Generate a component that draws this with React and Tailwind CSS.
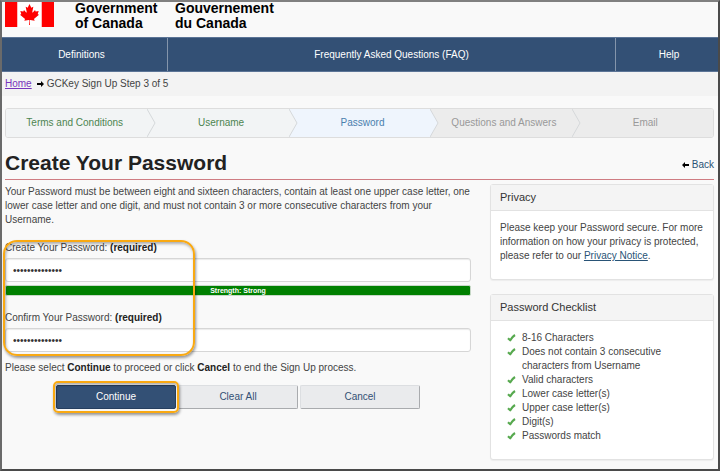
import React, { useState } from "react";

const steps = [
  { title: "Terms and Conditions", state: "done" },
  { title: "Username", state: "done" },
  { title: "Password", state: "current" },
  { title: "Questions and Answers", state: "todo" },
  { title: "Email", state: "todo" },
];

const stepClasses = {
  done: "bg-[#f2f4f5] text-[#4d8450]",
  current: "bg-[#eff5fd] text-[#4a80ad]",
  todo: "bg-[#ececec] text-[#999999]",
};

const stepFills = {
  done: "fill-[#f2f4f5]",
  current: "fill-[#eff5fd]",
  todo: "fill-[#ececec]",
};

const checklist = [
  "8-16 Characters",
  "Does not contain 3 consecutive characters from Username",
  "Valid characters",
  "Lower case letter(s)",
  "Upper case letter(s)",
  "Digit(s)",
  "Passwords match",
];

function CanadaFlag() {
  return (
    <svg viewBox="0 0 9600 4800" className="h-[25px] w-[49px] shrink-0" preserveAspectRatio="none" aria-hidden="true">
      <path fill="#fff" d="M2400 0h4800v4800H2400z" />
      <path fill="#f00" d="M0 0h2400v4800H0zM7200 0h2400v4800H7200z" />
      <path
        fill="#f00"
        d="M4890 4430l-45-863a95 95 0 0 1 111-98l859 151-116-320a65 65 0 0 1 20-73l941-762-212-99a65 65 0 0 1-34-79l186-572-542 115a65 65 0 0 1-73-38l-105-247-423 454a65 65 0 0 1-111-57l204-1052-327 189a65 65 0 0 1-91-27l-332-652-332 652a65 65 0 0 1-91 27l-327-189 204 1052a65 65 0 0 1-111 57l-423-454-105 247a65 65 0 0 1-73 38l-542-115 186 572a65 65 0 0 1-34 79l-212 99 941 762a65 65 0 0 1 20 73l-116 320 859-151a95 95 0 0 1 111 98l-45 863z"
      />
    </svg>
  );
}

function Arrow({ left }) {
  return (
    <svg viewBox="0 0 14 12" className="h-[6px] w-[7px] shrink-0" aria-hidden="true">
      <path
        fill="#000"
        d={left ? "M0 6l6-6v4h8v4H6v4z" : "M14 6L8 0v4H0v4h8v4z"}
      />
    </svg>
  );
}

function Tick() {
  return (
    <svg viewBox="0 0 18 16" className="mt-[3px] h-[8px] w-[9px] shrink-0" aria-hidden="true">
      <path
        d="M2 8.500L6.500 12.500C9 8 12 4.500 16 2"
        fill="none"
        stroke="#57a94f"
        strokeWidth="4.5"
        strokeLinejoin="round"
      />
    </svg>
  );
}

// orange callout drawn over the page
function Highlight({ className }) {
  return (
    <span
      aria-hidden="true"
      className={`pointer-events-none absolute border-2 border-[#f9a912] shadow-[1px_2px_3px_rgba(0,0,0,0.4),inset_1px_2px_3px_rgba(0,0,0,0.3)] ${className}`}
    />
  );
}

function PasswordField({ id, label, value, onChange }) {
  return (
    <div>
      <label htmlFor={id} className="block h-[14px]">
        {label}: <strong className="text-[#222222]">(required)</strong>
      </label>
      <input
        id={id}
        type="password"
        value={value}
        onChange={(e) => onChange(e.target.value)}
        className="mt-[3px] block h-6 w-full rounded-[3px] border border-[#d6d6d6] bg-white px-[7px] text-[10px] text-[#333333] shadow-[inset_0_1px_1px_rgba(0,0,0,0.08)] outline-none"
      />
    </div>
  );
}

function Panel({ title, children }) {
  return (
    <section className="rounded-[3px] border border-[#e2e2e2] bg-white shadow-[0_1px_1px_rgba(0,0,0,0.05)]">
      <h2 className="border-b border-[#e2e2e2] bg-[#f4f4f4] px-[9px] py-[5px] text-[11px] leading-[15px] text-[#333333]">
        {title}
      </h2>
      <div className="px-[9px] pt-[10px] pb-4">{children}</div>
    </section>
  );
}

function App() {
  const [password, setPassword] = useState("Maple12Leaf345");
  const [confirm, setConfirm] = useState("Maple12Leaf345");

  const buttonClasses =
    "h-6 w-[120px] rounded-[2px] border border-[#dcdee1] border-r-[#a9abae] border-b-[#a9abae] bg-[#eaebed] text-[#335075]";

  return (
    <div className="flex min-h-screen flex-col border-2 border-t-[#808080] border-r-[#4a4a4a] border-b-[#4a4a4a] border-l-[#6a6a6a] bg-[#f9f9f9] font-['Liberation_Sans',Arial,sans-serif] text-[10px] leading-[14px] text-[#444444]">
      <header>
        <div className="flex h-[35px] items-start px-[3px] text-[14px] leading-[15px] font-bold text-black">
          <CanadaFlag />
          <p className="-mt-px ml-[21px] w-[100px]">
            Government
            <br />
            of Canada
          </p>
          <p className="-mt-px">
            Gouvernement
            <br />
            du Canada
          </p>
        </div>
        <nav className="grid h-[35px] grid-cols-[166fr_448fr_102fr] border-y border-[#5b7496] bg-[#335075] text-center leading-[33px] text-white">
          <a href="#definitions" className="border-r border-[#8495ab] pr-[6px]">Definitions</a>
          <a href="#faq" className="border-r border-[#8495ab]">Frequently Asked Questions (FAQ)</a>
          <a href="#help" className="pl-1">Help</a>
        </nav>
        <div className="flex h-6 items-center bg-[#f3f3f3] px-[3px]">
          <a href="#home" className="mr-[5px] text-[#7834bc] underline">Home</a>
          <Arrow />
          <span className="ml-[3px]">GCKey Sign Up Step 3 of 5</span>
        </div>
      </header>

      <main className="pt-3 pr-1 pb-2 pl-[3px]">
        <ol className="grid h-[30px] grid-cols-5 overflow-hidden rounded-[3px] border border-[#dddddd] text-center leading-[28px]">
          {steps.map((step, i) => (
            <li key={step.title} className={`relative ${i > 0 ? "pl-[6px]" : "pr-1"} ${stepClasses[step.state]}`}>
              {step.title}
              {i < steps.length - 1 && (
                <svg viewBox="0 0 9 28" className="absolute top-0 -right-[9px] z-10 h-[28px] w-[9px]" aria-hidden="true">
                  <path d="M0 0L8 14L0 28" className={stepFills[step.state]} stroke="#d6d8da" />
                </svg>
              )}
            </li>
          ))}
        </ol>

        <div className="flex items-end justify-between border-b border-b-[#cf7c82] pt-3">
          <h1 className="pb-1 text-[21px] leading-[25px] font-bold text-[#222222]">Create Your Password</h1>
          <a href="#back" className="flex items-center gap-[3px] pb-[7px] text-[#295376]">
            <Arrow left />
            Back
          </a>
        </div>

        <div className="flex items-start">
          <form className="min-w-0 flex-1 pt-[5px]" onSubmit={(e) => e.preventDefault()}>
            <p className="-mr-2">
              Your Password must be between eight and sixteen characters, contain at least one upper case letter, one
              lower case letter and one digit, and must not contain 3 or more consecutive characters from your
              Username.
            </p>
            <div className="relative mt-[14px]">
              <PasswordField id="password" label="Create Your Password" value={password} onChange={setPassword} />
              <div className="mt-[3px] h-[11px] rounded-[2px] border border-[#c8d8c8] bg-[#008000] text-center text-[7px] leading-[9px] font-bold text-white">
                Strength: Strong
              </div>
              <div className="mt-[15px]">
                <PasswordField id="confirm" label="Confirm Your Password" value={confirm} onChange={setConfirm} />
              </div>
              <Highlight className="-top-px -bottom-1 -left-[2px] w-[192px] rounded-[14px]" />
            </div>
            <p className="mt-[9px]">
              Please select <strong className="text-[#222222]">Continue</strong> to proceed or click{" "}
              <strong className="text-[#222222]">Cancel</strong> to end the Sign Up process.
            </p>
            <div className="mt-[10px] flex justify-center gap-[2px]">
              <div className="relative">
                <button type="submit" className="h-6 w-[120px] rounded-[2px] border border-[#263f60] bg-[#335075] text-white">
                  Continue
                </button>
                <Highlight className="-inset-x-[3px] -inset-y-1 rounded-[5px]" />
              </div>
              <button type="button" className={buttonClasses} onClick={() => { setPassword(""); setConfirm(""); }}>
                Clear All
              </button>
              <button type="button" className={buttonClasses}>Cancel</button>
            </div>
          </form>

          <aside className="ml-[19px] w-[224px] shrink-0 space-y-[14px] pt-1">
            <Panel title="Privacy">
              <p>
                Please keep your Password secure. For more information on how your privacy is protected, please refer
                to our <a href="#privacy" className="text-[#295376] underline">Privacy Notice</a>.
              </p>
            </Panel>
            <Panel title="Password Checklist">
              <ul>
                {checklist.map((item) => (
                  <li key={item} className="flex gap-[6px] pl-[7px]">
                    <Tick />
                    <span className="max-w-[150px]">{item}</span>
                  </li>
                ))}
              </ul>
            </Panel>
          </aside>
        </div>
      </main>
    </div>
  );
}

export default App;
